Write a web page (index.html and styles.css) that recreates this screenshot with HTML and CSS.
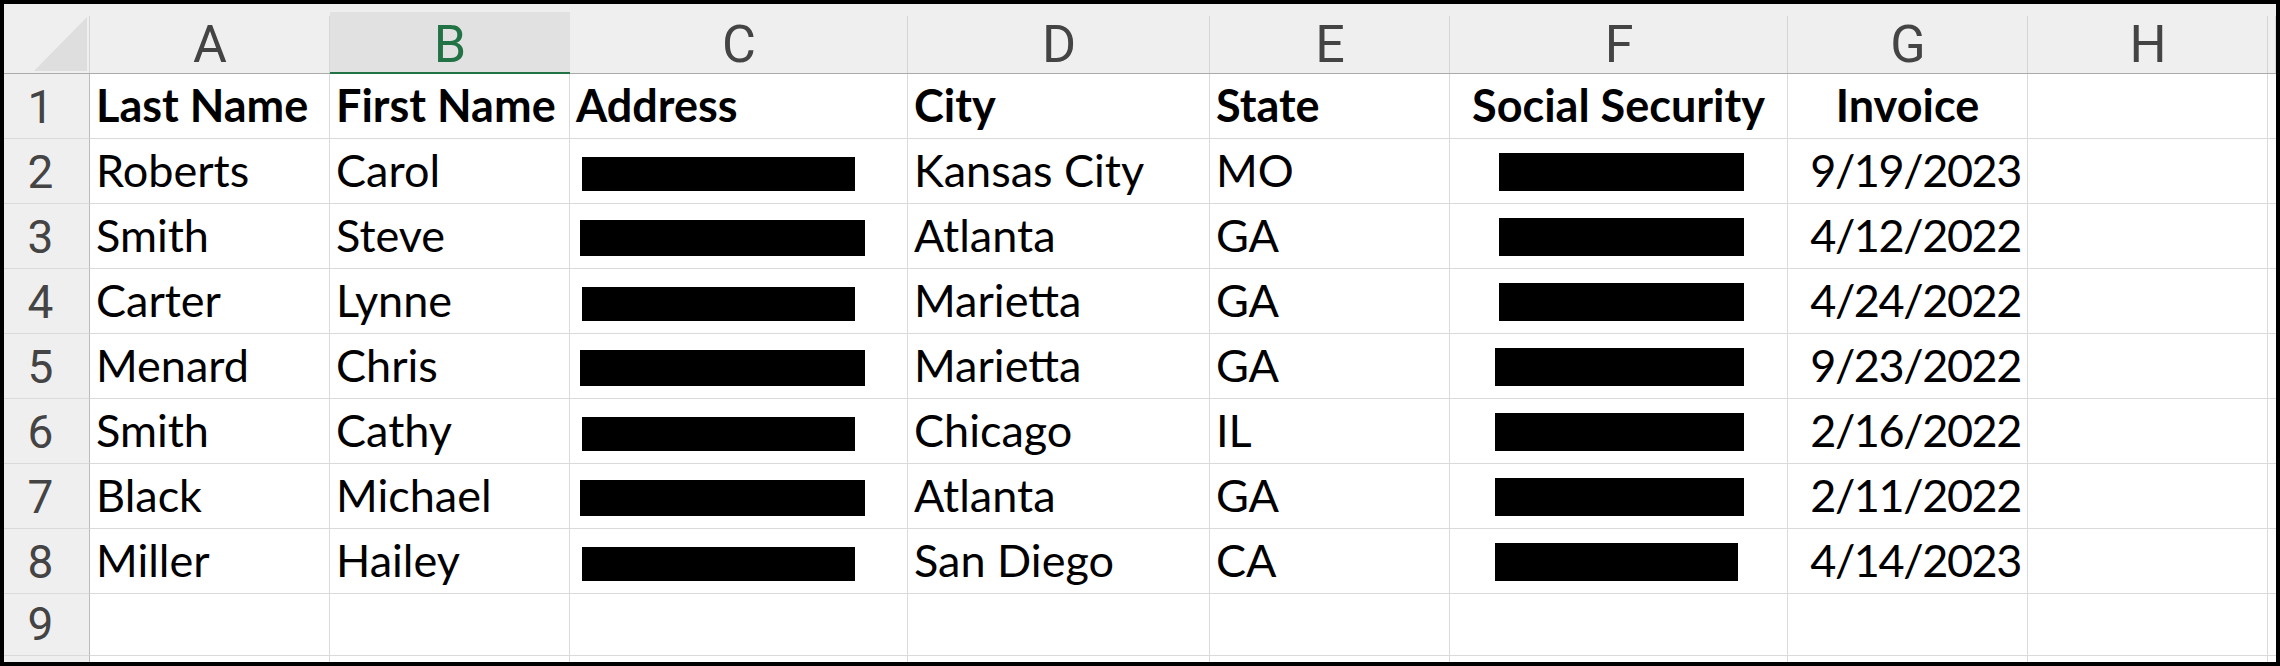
FILE: index.html
```html
<!DOCTYPE html>
<html>
  <head>
    <meta charset="utf-8">
    <title>Customers</title>
    <link rel="stylesheet" href="styles.css">
  </head>
  <body>
    <div class="sheet">
      <div class="row top">
        <div class="corner">
          <svg width="53" height="54" viewBox="0 0 53 54"><polygon points="53,0 53,54 0,54" fill="#dedede"/></svg>
        </div>
        <div class="col">A</div>
        <div class="col picked">B</div>
        <div class="col">C</div>
        <div class="col">D</div>
        <div class="col">E</div>
        <div class="col">F</div>
        <div class="col">G</div>
        <div class="col">H</div>
        <div class="col"></div>
      </div>

      <div class="row">
        <div class="num">1</div>
        <div class="cell bold">Last Name</div>
        <div class="cell bold">First Name</div>
        <div class="cell bold">Address</div>
        <div class="cell bold">City</div>
        <div class="cell bold">State</div>
        <div class="cell bold mid">Social Security</div>
        <div class="cell bold mid">Invoice</div>
        <div class="cell"></div>
        <div class="cell"></div>
      </div>

      <div class="row">
        <div class="num">2</div>
        <div class="cell">Roberts</div>
        <div class="cell">Carol</div>
        <div class="cell hide"><span class="bar c-short"></span></div>
        <div class="cell">Kansas City</div>
        <div class="cell">MO</div>
        <div class="cell hide"><span class="bar f-in"></span></div>
        <div class="cell right">9/19/2023</div>
        <div class="cell"></div>
        <div class="cell"></div>
      </div>

      <div class="row">
        <div class="num">3</div>
        <div class="cell">Smith</div>
        <div class="cell">Steve</div>
        <div class="cell hide"><span class="bar c-long"></span></div>
        <div class="cell">Atlanta</div>
        <div class="cell">GA</div>
        <div class="cell hide"><span class="bar f-in"></span></div>
        <div class="cell right">4/12/2022</div>
        <div class="cell"></div>
        <div class="cell"></div>
      </div>

      <div class="row">
        <div class="num">4</div>
        <div class="cell">Carter</div>
        <div class="cell">Lynne</div>
        <div class="cell hide"><span class="bar c-short"></span></div>
        <div class="cell">Marietta</div>
        <div class="cell">GA</div>
        <div class="cell hide"><span class="bar f-in"></span></div>
        <div class="cell right">4/24/2022</div>
        <div class="cell"></div>
        <div class="cell"></div>
      </div>

      <div class="row">
        <div class="num">5</div>
        <div class="cell">Menard</div>
        <div class="cell">Chris</div>
        <div class="cell hide"><span class="bar c-long"></span></div>
        <div class="cell">Marietta</div>
        <div class="cell">GA</div>
        <div class="cell hide"><span class="bar f-out"></span></div>
        <div class="cell right">9/23/2022</div>
        <div class="cell"></div>
        <div class="cell"></div>
      </div>

      <div class="row">
        <div class="num">6</div>
        <div class="cell">Smith</div>
        <div class="cell">Cathy</div>
        <div class="cell hide"><span class="bar c-short"></span></div>
        <div class="cell">Chicago</div>
        <div class="cell">IL</div>
        <div class="cell hide"><span class="bar f-out"></span></div>
        <div class="cell right">2/16/2022</div>
        <div class="cell"></div>
        <div class="cell"></div>
      </div>

      <div class="row">
        <div class="num">7</div>
        <div class="cell">Black</div>
        <div class="cell">Michael</div>
        <div class="cell hide"><span class="bar c-long"></span></div>
        <div class="cell">Atlanta</div>
        <div class="cell">GA</div>
        <div class="cell hide"><span class="bar f-out"></span></div>
        <div class="cell right">2/11/2022</div>
        <div class="cell"></div>
        <div class="cell"></div>
      </div>

      <div class="row">
        <div class="num">8</div>
        <div class="cell">Miller</div>
        <div class="cell">Hailey</div>
        <div class="cell hide"><span class="bar c-short"></span></div>
        <div class="cell">San Diego</div>
        <div class="cell">CA</div>
        <div class="cell hide"><span class="bar f-end"></span></div>
        <div class="cell right">4/14/2023</div>
        <div class="cell"></div>
        <div class="cell"></div>
      </div>

      <div class="row short">
        <div class="num">9</div>
        <div class="cell"></div>
        <div class="cell"></div>
        <div class="cell"></div>
        <div class="cell"></div>
        <div class="cell"></div>
        <div class="cell"></div>
        <div class="cell"></div>
        <div class="cell"></div>
        <div class="cell"></div>
      </div>

      <div class="row tail">
        <div class="num"></div>
        <div class="cell"></div>
        <div class="cell"></div>
        <div class="cell"></div>
        <div class="cell"></div>
        <div class="cell"></div>
        <div class="cell"></div>
        <div class="cell"></div>
        <div class="cell"></div>
        <div class="cell"></div>
      </div>
    </div>
  </body>
</html>
```

FILE: styles.css
```css
html {
  font-family: Lato, "Liberation Sans", sans-serif;
}
body {
  margin: 0;
  background: #000;
}
.sheet {
  box-sizing: border-box;
  width: 2280px;
  height: 666px;
  border: 4px solid #000;
  background: #fff;
  display: flex;
  flex-direction: column;
  overflow: hidden;
}
.row {
  display: grid;
  grid-template-columns: 86px 240px 240px 338px 302px 240px 338px 240px 240px 1fr;
  height: 65px;
  flex: none;
}
.row.top {
  height: 70px;
}
.row.short {
  height: 62px;
}
.row.tail {
  height: 6px;
}

/* column letters */
.corner,
.col {
  box-sizing: border-box;
  background: #efefef linear-gradient(#d6d6d6, #d6d6d6) right bottom / 1px calc(100% - 12px) no-repeat;
  border-bottom: 1px solid #ababab;
}
.corner {
  display: flex;
  justify-content: flex-end;
  align-items: flex-end;
  padding: 0 3px 2px 0;
}
.col {
  display: flex;
  justify-content: center;
  align-items: flex-end;
  padding-bottom: 2px;
  font-family: Roboto, "Liberation Sans", sans-serif;
  font-size: 52px;
  line-height: 1;
  color: #444;
}
.col.picked {
  background: linear-gradient(#efefef 8px, #e1e1e1 8px);
  border-bottom: 2px solid #217346;
  padding-bottom: 1px;
  color: #217346;
}

/* row numbers */
.num {
  box-sizing: border-box;
  background: #efefef;
  border-right: 1px solid #bcbcbc;
  border-bottom: 1px solid #dadada;
  display: flex;
  justify-content: center;
  align-items: flex-end;
  padding: 0 12px 8px 0;
  font-family: Roboto, "Liberation Sans", sans-serif;
  font-size: 46px;
  line-height: 1;
  color: #444;
}

/* data cells */
.cell {
  box-sizing: border-box;
  border-right: 1px solid #dadada;
  border-bottom: 1px solid #dadada;
  display: flex;
  align-items: flex-end;
  padding: 0 6px 10px;
  font-size: 45px;
  line-height: 1;
  color: #000;
  white-space: nowrap;
}
.bold {
  font-weight: 700;
}
.mid {
  justify-content: center;
}
.right {
  justify-content: flex-end;
  letter-spacing: -1.4px;
}
.cell.hide {
  padding: 0 0 12px 0;
}

/* redacted values */
.bar {
  display: block;
  background: #000;
}
.c-short {
  width: 273px;
  height: 34px;
  margin-left: 12px;
}
.c-long {
  width: 285px;
  height: 36px;
  margin-left: 10px;
}
.f-in {
  width: 245px;
  height: 38px;
  margin-left: 49px;
}
.f-out {
  width: 249px;
  height: 38px;
  margin-left: 45px;
}
.f-end {
  width: 243px;
  height: 38px;
  margin-left: 45px;
}
```
